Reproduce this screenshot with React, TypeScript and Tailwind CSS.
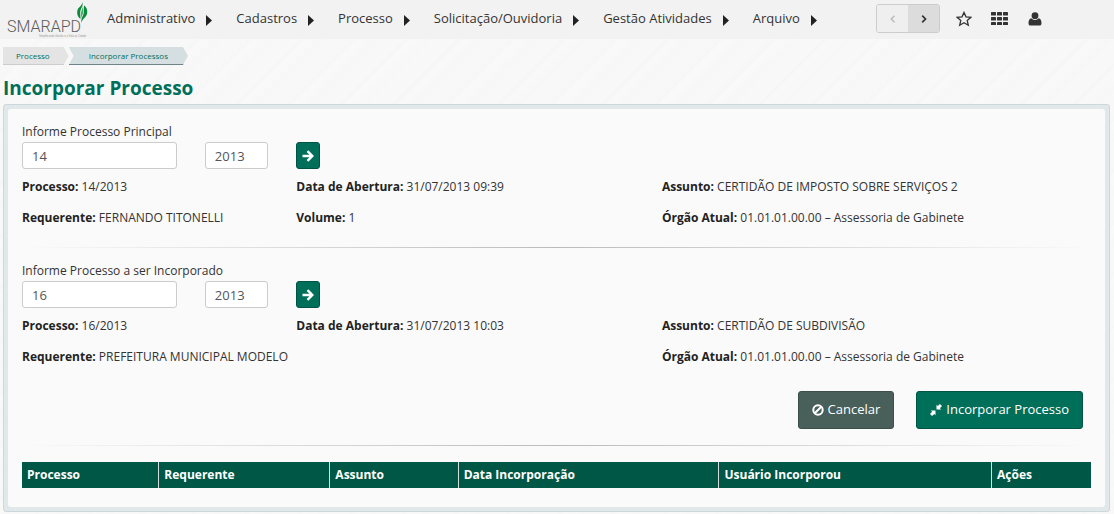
import { useState } from 'react';

const MENU = ['Administrativo', 'Cadastros', 'Processo', 'Solicitação/Ouvidoria', 'Gestão Atividades', 'Arquivo'];

const COLUMNS = [
  { label: 'Processo', width: 'w-[12.8%]' },
  { label: 'Requerente', width: 'w-[16%]' },
  { label: 'Assunto', width: 'w-[12%]' },
  { label: 'Data Incorporação', width: 'w-[24.4%]' },
  { label: 'Usuário Incorporou', width: 'w-[25.5%]' },
  { label: 'Ações', width: 'w-[9.3%]' },
];

const PRINCIPAL = {
  numero: '14',
  ano: '2013',
  processo: '14/2013',
  abertura: '31/07/2013 09:39',
  assunto: 'CERTIDÃO DE IMPOSTO SOBRE SERVIÇOS 2',
  requerente: 'FERNANDO TITONELLI',
  volume: '1',
  orgao: '01.01.01.00.00 – Assessoria de Gabinete',
};

const INCORPORADO = {
  numero: '16',
  ano: '2013',
  processo: '16/2013',
  abertura: '31/07/2013 10:03',
  assunto: 'CERTIDÃO DE SUBDIVISÃO',
  requerente: 'PREFEITURA MUNICIPAL MODELO',
  volume: '',
  orgao: '01.01.01.00.00 – Assessoria de Gabinete',
};

function Logo() {
  return (
    <svg viewBox="0 0 84 39" className="h-[39px] w-[84px]" aria-label="SMARAPD">
      <text x="2" y="33" fontSize="16" fill="#5c5c5c" fontFamily="Roboto, sans-serif" fontWeight="300">SMARAPD</text>
      <text x="34" y="38" fontSize="2.600" fill="#999" fontFamily="Liberation Sans, sans-serif">Simplificando Gestão e a Vida na Cidade</text>
      <path d="M77.500 3C78 6 77 8 76 10C74.500 13 75.500 16 75.500 20C72.500 18 71.500 14.500 72.500 11C73.500 8 77 7 77.500 3Z" fill="#0d8a3c" />
      <path d="M79 6.500C82 8.500 83 12 81.800 15.500C80.500 19 77 20 76.500 24C75.800 20.500 77 18.500 78 16.500C79.300 13.500 79 10.500 79 6.500Z" fill="#0d8a3c" />
      <path d="M78 6C78.400 10 79 13 77.300 16C76.600 17.300 76.300 18.500 76 20C75.900 16 75.700 13.500 76.800 11C77.500 9.500 78 8 78 6Z" fill="#3fae5f" />
    </svg>
  );
}

function ArrowIcon() {
  return (
    <svg viewBox="0 0 12 12" className="h-3 w-3" fill="none" stroke="currentColor" strokeWidth="2.400">
      <path d="M0.500 6H10M5.500 1.200L10.300 6L5.500 10.800" />
    </svg>
  );
}

function BanIcon() {
  return (
    <svg viewBox="0 0 12 12" className="h-3 w-3" fill="none" stroke="currentColor" strokeWidth="2">
      <circle cx="6" cy="6" r="4.700" />
      <path d="M2.700 9.300L9.300 2.700" />
    </svg>
  );
}

function ShrinkIcon() {
  return (
    <svg viewBox="0 0 12 12" className="h-3 w-3" fill="currentColor">
      <path d="M6.500 0.800L7.800 2.100L9.900 0L12 2.100L9.900 4.200L11.200 5.500H6.500Z" />
      <path d="M5.500 11.200L4.200 9.900L2.100 12L0 9.900L2.100 7.800L0.800 6.500H5.500Z" />
    </svg>
  );
}

function GridIcon() {
  return (
    <svg viewBox="0 0 17 13" className="h-[13px] w-[17px]" fill="currentColor">
      {[0, 5, 10].map((y) => [0, 6, 12].map((x) => <rect key={`${x}-${y}`} x={x} y={y} width="5" height="3.500" rx="0.600" />))}
    </svg>
  );
}

function Field({ label, value }: { label: string; value: string }) {
  return (
    <p className="whitespace-nowrap">
      <strong className="text-[#222]">{label}:</strong> {value}
    </p>
  );
}

function ProcessoForm({ id, title, data }: { id: string; title: string; data: typeof PRINCIPAL }) {
  const [numero, setNumero] = useState(data.numero);
  const [ano, setAno] = useState(data.ano);
  const input = 'h-[27px] w-full rounded-[3px] border border-[#ccc] bg-white px-[9px] text-[13px] text-[#555] focus:outline-none focus:border-[#006f5a]';

  return (
    <form onSubmit={(e) => e.preventDefault()}>
      <label htmlFor={id} className="block px-[14px] leading-5">{title}</label>
      <div className="grid grid-cols-12">
        <div className="col-span-2 px-[14px]">
          <input id={id} value={numero} onChange={(e) => setNumero(e.target.value)} className={input} />
        </div>
        <div className="px-[14px]">
          <input aria-label="Ano" value={ano} onChange={(e) => setAno(e.target.value)} className={input} />
        </div>
        <div className="px-[14px]">
          <button aria-label="Buscar" className="flex h-[27px] w-6 items-center justify-center rounded-[3px] border border-[#005443] bg-[#006f5a] text-white">
            <ArrowIcon />
          </button>
        </div>
      </div>
      <div className="mt-2 grid grid-cols-12 gap-y-[11px] leading-5 *:px-[14px]">
        <div className="col-span-3"><Field label="Processo" value={data.processo} /></div>
        <div className="col-span-4"><Field label="Data de Abertura" value={data.abertura} /></div>
        <div className="col-span-5"><Field label="Assunto" value={data.assunto} /></div>
        <div className="col-span-3"><Field label="Requerente" value={data.requerente} /></div>
        <div className="col-span-4">{data.volume && <Field label="Volume" value={data.volume} />}</div>
        <div className="col-span-5"><Field label="Órgão Atual" value={data.orgao} /></div>
      </div>
    </form>
  );
}

function Divider() {
  return <hr className="mx-[14px] h-px border-0 bg-linear-to-r from-transparent via-[#bbb] to-transparent" />;
}

export default function App() {
  return (
    <div className="min-h-screen bg-[#f8f8f8] bg-[repeating-linear-gradient(135deg,#f8f8f8_0px,#f8f8f8_17px,#f6f6f6_19px,#f9f9f9_23px,#f7f7f7_37px)] pb-[2px] font-['Open_Sans',sans-serif] text-[12px] text-[#333]">
      <header className="flex h-[39px] items-center bg-[#f2f2f2] pb-[2px] pl-[5px]">
        <a href="#" className="mr-[18px] shrink-0"><Logo /></a>
        <nav className="flex items-center gap-6 text-[13px]">
          {MENU.map((item) => (
            <a key={item} href="#" className="flex items-center gap-[11px] whitespace-nowrap">
              {item}
              <svg viewBox="0 0 6 11" className="mt-[3px] h-[11px] w-[6px]" fill="#222"><path d="M0 0L6 5.500L0 11Z" /></svg>
            </a>
          ))}
        </nav>
        <div className="mr-[72px] ml-auto flex items-center text-[#333]">
          <div className="mr-4 flex h-[29px] w-16 overflow-hidden rounded-[3px] border border-[#ccc]">
            <button aria-label="Anterior" disabled className="flex flex-1 items-center justify-center bg-[#efefef] text-[#bbb]">
              <svg viewBox="0 0 6 8" className="h-2 w-[6px]" fill="none" stroke="currentColor" strokeWidth="1.500"><path d="M4.500 0.700L1.200 4L4.500 7.300" /></svg>
            </button>
            <button aria-label="Próximo" className="flex flex-1 items-center justify-center bg-[#dcdcdc]">
              <svg viewBox="0 0 6 8" className="h-2 w-[6px]" fill="none" stroke="currentColor" strokeWidth="1.700"><path d="M1.200 0.700L4.500 4L1.200 7.300" /></svg>
            </button>
          </div>
          <button aria-label="Favoritos" className="mr-[19px]">
            <svg viewBox="0 0 16 16" className="h-4 w-4" fill="none" stroke="currentColor" strokeWidth="1.300"><path d="M8 1.400L10 5.800L14.900 6.300L11.200 9.500L12.300 14.300L8 11.800L3.700 14.300L4.800 9.500L1.100 6.300L6 5.800Z" /></svg>
          </button>
          <button aria-label="Aplicativos" className="mr-5"><GridIcon /></button>
          <button aria-label="Usuário">
            <svg viewBox="0 0 14 14" className="h-[14px] w-[14px]" fill="currentColor">
              <circle cx="7" cy="3.700" r="3.400" />
              <path d="M3.300 6.200C4.300 7.300 5.500 7.900 7 7.900S9.700 7.300 10.700 6.200C12.700 6.600 13.500 8.500 13.500 11.300C13.500 12.800 12.700 13.600 11.500 13.600H2.500C1.300 13.600 0.500 12.800 0.500 11.300C0.500 8.500 1.300 6.600 3.300 6.200Z" />
            </svg>
          </button>
        </div>
      </header>

      <main className="pr-1 pl-[3px]">
        <nav aria-label="Navegação" className="mt-2 flex text-[8px] leading-4 text-[#006f5a]">
          <a href="#" className="border-b border-[#ccc] bg-[#e4e4e4] pt-px pr-[19px] pl-[13px] [clip-path:polygon(0_0,calc(100%-5px)_0,100%_50%,calc(100%-5px)_100%,0_100%)]">Processo</a>
          <a href="#" className="border-b border-[#6f8388] bg-[#d5dfe2] pt-px pr-5 pl-5 [clip-path:polygon(0_0,calc(100%-5px)_0,100%_50%,calc(100%-5px)_100%,0_100%,5px_50%)]">Incorporar Processos</a>
        </nav>
        <h1 className="mt-[11px] text-[19px] leading-6 font-bold text-[#006f5a]">Incorporar Processo</h1>

        <section className="mt-1 rounded-[3px] border border-[#ccd8dc] bg-[#e1e8ea] p-1">
          <div className="rounded-[3px] bg-[#fafafa] pt-[13px] pb-[19px]">
            <ProcessoForm id="principal" title="Informe Processo Principal" data={PRINCIPAL} />
            <div className="pt-[19px] pb-[13px]"><Divider /></div>
            <ProcessoForm id="incorporado" title="Informe Processo a ser Incorporado" data={INCORPORADO} />

            <div className="mt-6 mr-[22px] flex justify-end gap-[22px] text-[13px] text-white">
              <button className="flex h-[38px] items-center gap-1 rounded-[3px] border border-[#3c4f4b] bg-[#485f5a] px-[13px]">
                <BanIcon /> Cancelar
              </button>
              <button className="flex h-[38px] items-center gap-1 rounded-[3px] border border-[#005443] bg-[#006f5a] px-[13px]">
                <ShrinkIcon /> Incorporar Processo
              </button>
            </div>

            <div className="py-4"><Divider /></div>
            <div className="px-[14px]">
              <table className="w-full table-fixed border-collapse text-left text-white">
                <thead>
                  <tr className="h-[26px] bg-[#005746]">
                    {COLUMNS.map((c) => (
                      <th key={c.label} className={`${c.width} border-l border-[#d5e0dd] pl-[5px] font-bold first:border-l-0`}>{c.label}</th>
                    ))}
                  </tr>
                </thead>
              </table>
            </div>
          </div>
        </section>
      </main>
    </div>
  );
}
